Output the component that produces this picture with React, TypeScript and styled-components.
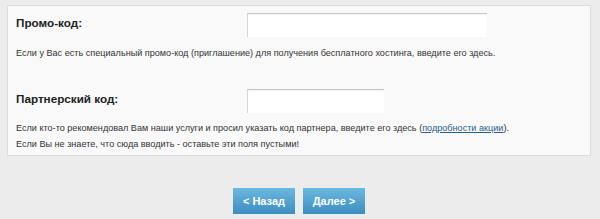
import React from "react";
import styled, { createGlobalStyle } from "styled-components";

const Global = createGlobalStyle`
  html, body { margin: 0; padding: 0; background: #ececec; }
  body { font-family: "Liberation Sans", Arial, sans-serif; color: #333; }
`;

const Page = styled.div`
  padding: 5px 9px 0 7px;
  width: 600px;
  height: 219px;
  box-sizing: border-box;
`;

const Panel = styled.div`
  background: #f9f9f9;
  border: 1px solid #dcdcdc;
  padding: 7px 8px 3px 8px;
`;

const Row = styled.div<{ $top?: number }>`
  display: flex;
  align-items: flex-start;
  height: 24px;
  margin-top: ${(p) => p.$top ?? 0}px;
`;

const Label = styled.div`
  width: 231px;
  font-weight: bold;
  font-size: 11.7px;
  line-height: 20px;
  color: #222;
`;

const Input = styled.input<{ $w: number }>`
  width: ${(p) => p.$w}px;
  height: 24px;
  box-sizing: border-box;
  border: none;
  border-top: 1px solid #c8c8c8;
  border-left: 1px solid #d6d6d6;
  background: #fff;
  box-shadow: inset 0 1px 1px rgba(0, 0, 0, 0.06);
  outline: none;
  padding: 0 4px;
`;

const Text = styled.p<{ $top: number }>`
  margin: ${(p) => p.$top}px 0 0 0;
  font-size: 9.1px;
  line-height: 16px;
  color: #333;
  white-space: nowrap;
`;

const Link = styled.a`
  color: #2a5d8a;
  text-decoration: underline;
`;

const Buttons = styled.div`
  display: flex;
  justify-content: center;
  gap: 8px;
  margin-top: 32px;
`;

const Button = styled.button`
  width: 62px;
  height: 26px;
  border: none;
  border-radius: 0;
  background: linear-gradient(#6cb8e0, #3b8ec1);
  color: #fff;
  font-family: "Liberation Sans", Arial, sans-serif;
  font-weight: bold;
  font-size: 11px;
  padding: 0;
  cursor: pointer;
`;

export default function App() {
  return (
    <>
      <Global />
      <Page>
        <Panel>
          <Row>
            <Label>Промо-код:</Label>
            <Input $w={240} />
          </Row>
          <Text $top={8}>
            Если у Вас есть специальный промо-код (приглашение) для получения бесплатного хостинга, введите его здесь.
          </Text>
          <Row $top={28}>
            <Label>Партнерский код:</Label>
            <Input $w={137} />
          </Row>
          <Text $top={7}>
            Если кто-то рекомендовал Вам наши услуги и просил указать код партнера, введите его здесь (
            <Link href="#">подробности акции</Link>).
            <br />
            Если Вы не знаете, что сюда вводить - оставьте эти поля пустыми!
          </Text>
        </Panel>
        <Buttons>
          <Button>&lt; Назад</Button>
          <Button>Далее &gt;</Button>
        </Buttons>
      </Page>
    </>
  );
}
